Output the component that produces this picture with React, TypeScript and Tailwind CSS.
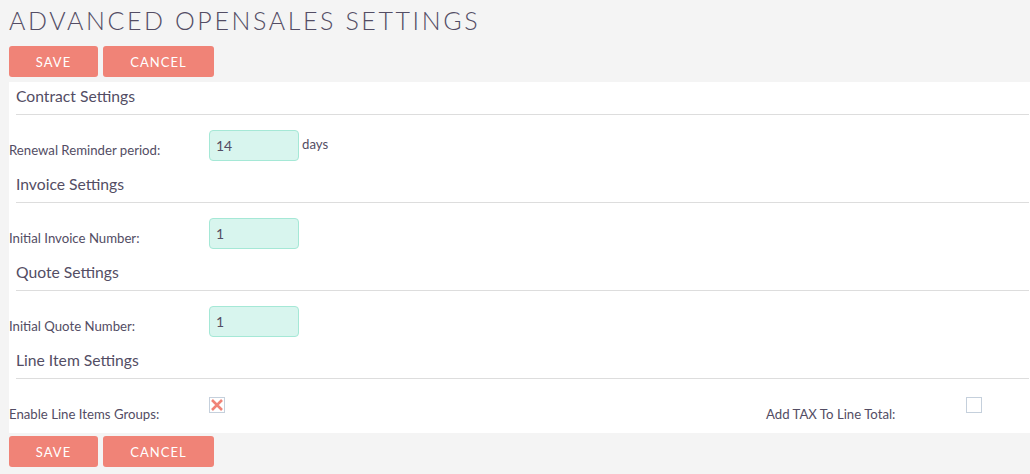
const font = { fontFamily: "Lato, 'Open Sans', sans-serif" };

function Buttons() {
  return (
    <div className="flex gap-[5px] pl-[9px]">
      <button className="h-[31px] w-[89px] rounded-[3px] bg-[#f08377] pt-[2px] text-[13px] tracking-[1px] text-white">
        SAVE
      </button>
      <button className="h-[31px] w-[111px] rounded-[3px] bg-[#f08377] pt-[2px] text-[13px] tracking-[1px] text-white">
        CANCEL
      </button>
    </div>
  );
}

function Header({ title }: { title: string }) {
  return (
    <div className="ml-[7px] mr-px border-b border-[#dddddd] pt-[4px] pb-[8px] text-[15.7px] leading-[20px] text-[#534d64]">
      {title}
    </div>
  );
}

function InputRow({ label, value, suffix }: { label: string; value: string; suffix?: string }) {
  return (
    <div className="flex h-[55px] pt-[15px] text-[#534d64]">
      <div className="w-[200px] pt-[10px] text-[13.2px] leading-[20px]">{label}</div>
      <input
        defaultValue={value}
        className="h-[31px] w-[90px] rounded-[4px] border border-[#a5e8d6] bg-[#d8f5ee] px-[6px] text-[14px] text-[#534d64] outline-none"
      />
      {suffix && <span className="ml-[3px] mt-[4px] text-[13.2px] leading-[20px]">{suffix}</span>}
    </div>
  );
}

function Checkbox({ checked }: { checked?: boolean }) {
  return (
    <div className="flex h-[16px] w-[16px] items-center justify-center border border-[#c5d0dc] bg-white">
      {checked && (
        <svg width="14" height="14" viewBox="0 0 14 14">
          <path d="M2 2 L12 12 M12 2 L2 12" stroke="#f08377" strokeWidth="2.6" />
        </svg>
      )}
    </div>
  );
}

export default function App() {
  return (
    <div className="h-[474px] w-[1030px] overflow-hidden bg-[#f4f4f4]" style={font}>
      <h1 className="pl-[9px] pt-[3px] text-[25px] font-light leading-[34px] tracking-[2.6px] text-[#534d64]">
        ADVANCED OPENSALES SETTINGS
      </h1>
      <div className="mt-[9px]">
        <Buttons />
      </div>
      <div className="ml-[9px] mt-[5px] bg-white">
        <Header title="Contract Settings" />
        <InputRow label="Renewal Reminder period:" value="14" suffix="days" />
        <Header title="Invoice Settings" />
        <InputRow label="Initial Invoice Number:" value="1" />
        <Header title="Quote Settings" />
        <InputRow label="Initial Quote Number:" value="1" />
        <Header title="Line Item Settings" />
        <div className="flex h-[54px] pt-[18px] text-[#534d64]">
          <div className="w-[200px] pt-[7px] text-[13.2px] leading-[20px]">Enable Line Items Groups:</div>
          <div className="w-[557px]">
            <Checkbox checked />
          </div>
          <div className="w-[200px] pt-[7px] text-[13.2px] leading-[20px]">Add TAX To Line Total:</div>
          <div>
            <Checkbox />
          </div>
        </div>
      </div>
      <div className="mt-[3px]">
        <Buttons />
      </div>
    </div>
  );
}
